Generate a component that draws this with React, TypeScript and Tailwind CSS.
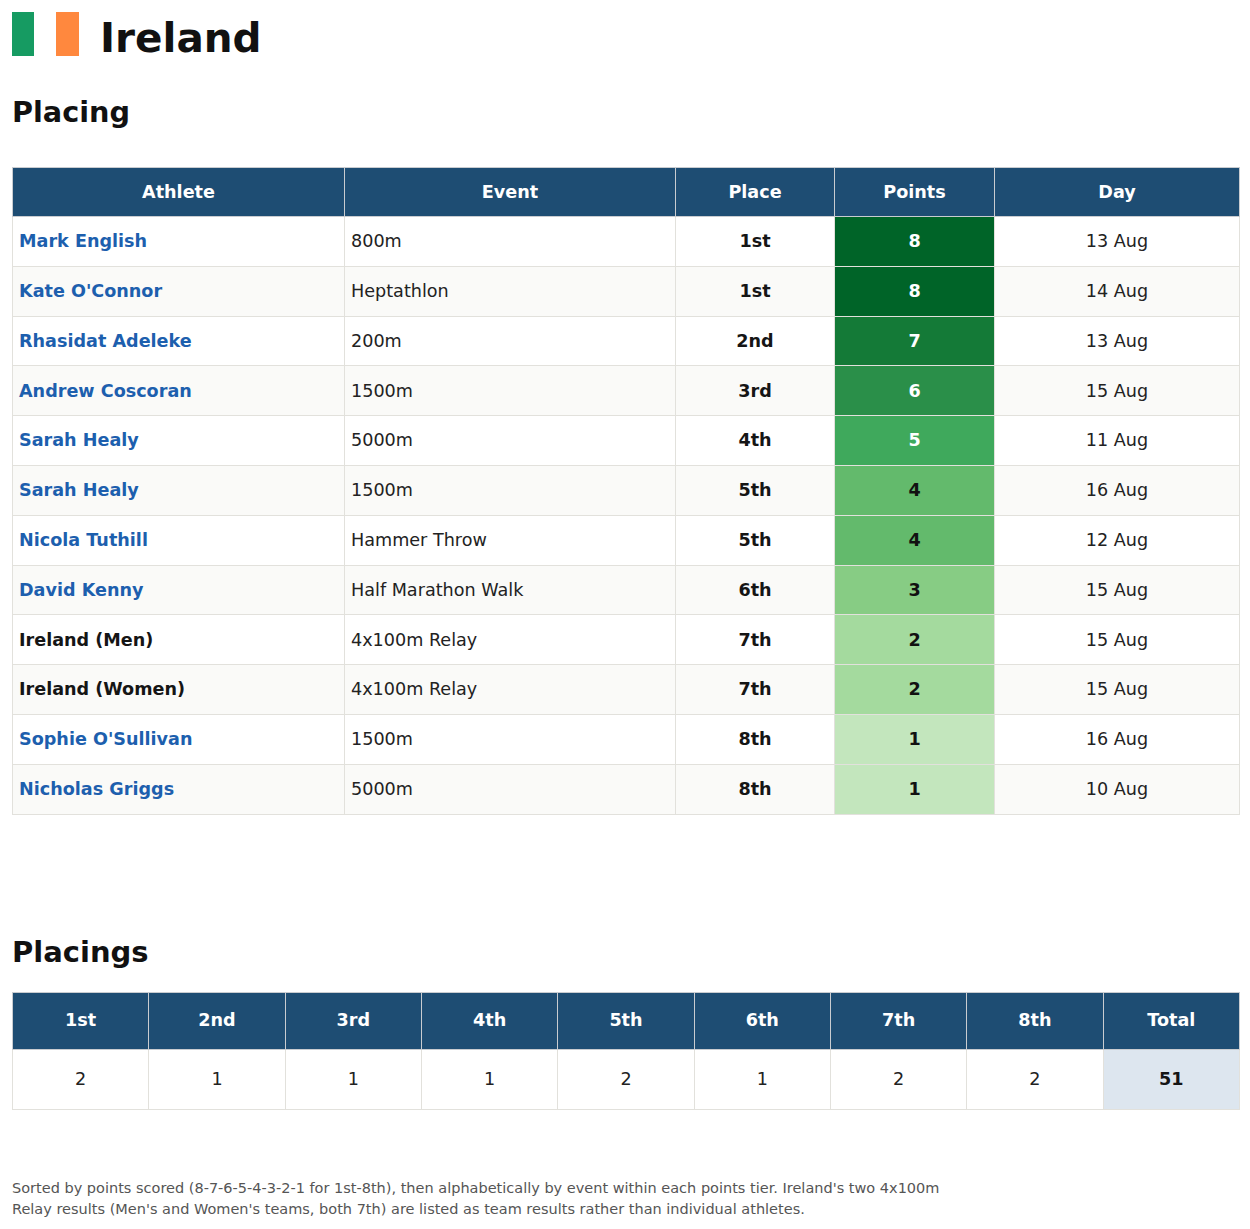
import React from 'react';

const rows = [
  { athlete: 'Mark English', link: true, event: '800m', place: '1st', points: 8, day: '13 Aug' },
  { athlete: "Kate O'Connor", link: true, event: 'Heptathlon', place: '1st', points: 8, day: '14 Aug' },
  { athlete: 'Rhasidat Adeleke', link: true, event: '200m', place: '2nd', points: 7, day: '13 Aug' },
  { athlete: 'Andrew Coscoran', link: true, event: '1500m', place: '3rd', points: 6, day: '15 Aug' },
  { athlete: 'Sarah Healy', link: true, event: '5000m', place: '4th', points: 5, day: '11 Aug' },
  { athlete: 'Sarah Healy', link: true, event: '1500m', place: '5th', points: 4, day: '16 Aug' },
  { athlete: 'Nicola Tuthill', link: true, event: 'Hammer Throw', place: '5th', points: 4, day: '12 Aug' },
  { athlete: 'David Kenny', link: true, event: 'Half Marathon Walk', place: '6th', points: 3, day: '15 Aug' },
  { athlete: 'Ireland (Men)', link: false, event: '4x100m Relay', place: '7th', points: 2, day: '15 Aug' },
  { athlete: 'Ireland (Women)', link: false, event: '4x100m Relay', place: '7th', points: 2, day: '15 Aug' },
  { athlete: "Sophie O'Sullivan", link: true, event: '1500m', place: '8th', points: 1, day: '16 Aug' },
  { athlete: 'Nicholas Griggs', link: true, event: '5000m', place: '8th', points: 1, day: '10 Aug' },
];

// points -> cell colour (dark for high scores, light for low)
const pointsStyle: Record<number, string> = {
  8: 'bg-[#006428] text-white',
  7: 'bg-[#147a37] text-white',
  6: 'bg-[#2a8f49] text-white',
  5: 'bg-[#3fa95c] text-white',
  4: 'bg-[#63ba6c] text-[#111]',
  3: 'bg-[#87cc84] text-[#111]',
  2: 'bg-[#a4da9e] text-[#111]',
  1: 'bg-[#c3e6bd] text-[#111]',
};

const placings = [
  { label: '1st', count: 2 },
  { label: '2nd', count: 1 },
  { label: '3rd', count: 1 },
  { label: '4th', count: 1 },
  { label: '5th', count: 2 },
  { label: '6th', count: 1 },
  { label: '7th', count: 2 },
  { label: '8th', count: 2 },
];

export default function App() {
  const total = rows.reduce((s, r) => s + r.points, 0);

  return (
    <div className="min-h-[1229px] bg-white pl-3 pr-[10px] pt-3 pb-4 text-[#222] font-['DejaVu_Sans',sans-serif]">
      <div className="flex items-center h-11">
        <div className="flex h-11">
          <div className="w-[22px] bg-[#169b62]" />
          <div className="w-[22px] bg-white" />
          <div className="w-[23px] bg-[#ff883e]" />
        </div>
        <h1 className="ml-[21px] pt-[8px] text-[40.5px] font-bold leading-none text-[#111]">Ireland</h1>
      </div>

      <h2 className="mt-[39px] text-[28.7px] font-bold leading-[34px] text-[#111]">Placing</h2>

      <table className="mt-[38px] w-full table-fixed border-collapse border border-[#dcdbd6] text-[17.6px]">
        <colgroup>
          <col className="w-[332px]" />
          <col className="w-[331px]" />
          <col className="w-[159px]" />
          <col className="w-[160px]" />
          <col />
        </colgroup>
        <thead>
          <tr className="h-[49px] bg-[#1e4d73] text-white">
            {['Athlete', 'Event', 'Place', 'Points', 'Day'].map((h) => (
              <th key={h} className="border border-[#c9ccd0] font-bold text-center">
                {h}
              </th>
            ))}
          </tr>
        </thead>
        <tbody>
          {rows.map((r, i) => (
            <tr key={i} className={`h-[49.8px] ${i % 2 === 0 ? 'bg-white' : 'bg-[#fafaf8]'}`}>
              <td
                className={`border border-[#e2e1dc] px-[6px] font-bold ${
                  r.link ? 'text-[#1d5fae]' : 'text-[#151515]'
                }`}
              >
                {r.athlete}
              </td>
              <td className="border border-[#e2e1dc] px-[6px]">{r.event}</td>
              <td className="border border-[#e2e1dc] text-center font-bold text-[#151515]">{r.place}</td>
              <td className={`border border-[#e2e1dc] text-center font-bold ${pointsStyle[r.points]}`}>
                {r.points}
              </td>
              <td className="border border-[#e2e1dc] text-center">{r.day}</td>
            </tr>
          ))}
        </tbody>
      </table>

      <h2 className="mt-[120px] text-[29px] font-bold leading-[34px] text-[#111]">Placings</h2>

      <table className="mt-[23px] w-full table-fixed border-collapse border border-[#dcdbd6] text-[17.6px]">
        <thead>
          <tr className="h-[57px] bg-[#1e4d73] text-white">
            {placings.map((p) => (
              <th key={p.label} className="border border-[#c9ccd0] font-bold text-center">
                {p.label}
              </th>
            ))}
            <th className="border border-[#c9ccd0] font-bold text-center">Total</th>
          </tr>
        </thead>
        <tbody>
          <tr className="h-[60px] bg-white">
            {placings.map((p) => (
              <td key={p.label} className="border border-[#e2e1dc] text-center">
                {p.count}
              </td>
            ))}
            <td className="border border-[#e2e1dc] bg-[#dde6ef] text-center font-bold text-[#151515]">{total}</td>
          </tr>
        </tbody>
      </table>

      <p className="mt-[68px] max-w-[950px] text-[14.5px] leading-[21px] text-[#555]">
        Sorted by points scored (8-7-6-5-4-3-2-1 for 1st-8th), then alphabetically by event within each points
        tier. Ireland's two 4x100m Relay results (Men's and Women's teams, both 7th) are listed as team results
        rather than individual athletes.
      </p>
    </div>
  );
}
